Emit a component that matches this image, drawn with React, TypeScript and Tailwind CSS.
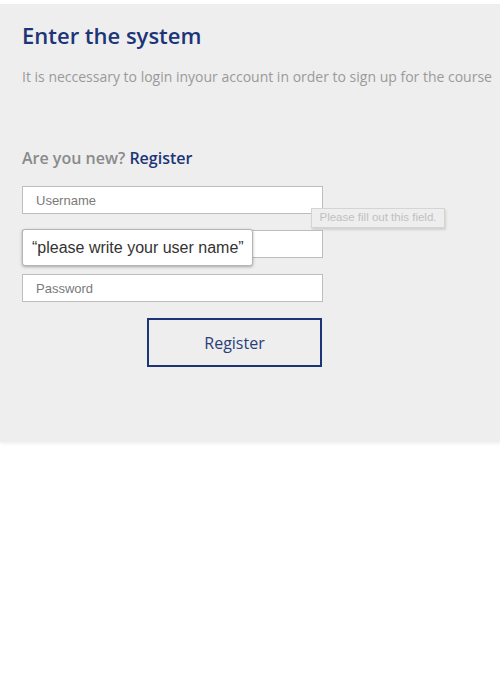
import { useState } from "react";

const LoginPanel = () => {
  const [username, setUsername] = useState("");
  const [nickname, setNickname] = useState("");
  const [password, setPassword] = useState("");

  return (
    <div className="min-h-[700px] bg-white pt-[4px] font-['Open_Sans',sans-serif]">
      <section className="h-[438px] bg-[#eeeeee] px-[22px] pt-[18px] shadow-[0_2px_3px_rgba(0,0,0,0.06)]">
        {/* Header */}
        <h1 className="text-[22px] leading-[26px] font-semibold text-[#1c3578]">Enter the system</h1>
        <p className="mt-[19px] text-[14px] leading-[20px] text-[#9a9a9a] whitespace-nowrap">
          It is neccessary to login inyour account in order to sign up for the course
        </p>

        <h2 className="mt-[60px] text-[16px] leading-[22px] font-semibold text-[#8a8a8a]">
          Are you new? <span className="text-[#1c3578]">Register</span>
        </h2>

        {/* Form */}
        <form className="mt-[17px] w-[301px] flex flex-col gap-[16px]" onSubmit={(e) => e.preventDefault()}>
          <div className="relative">
            <input
              type="text"
              value={username}
              onChange={(e) => setUsername(e.target.value)}
              placeholder="Username"
              className="w-full h-[28px] px-[13px] bg-white border border-[#bdbdbd] text-[13px] font-['Liberation_Sans',Arial,sans-serif] text-[#333] placeholder:text-[#7a7a7a] outline-none"
            />
            {/* Browser validation bubble */}
            <div className="absolute left-[289px] top-[22px] w-[134px] h-[20px] bg-[#eeeeee] border border-[#d4d4d4] shadow-[1px_2px_2px_rgba(0,0,0,0.12)] flex items-center justify-center text-[11.5px] text-[#c0c0c0] font-['Liberation_Sans',Arial,sans-serif] whitespace-nowrap">
              Please fill out this field.
            </div>
          </div>

          <div className="relative">
            <input
              type="text"
              value={nickname}
              onChange={(e) => setNickname(e.target.value)}
              className="w-full h-[28px] px-[13px] bg-white border border-[#bdbdbd] text-[13px] font-['Liberation_Sans',Arial,sans-serif] text-[#333] outline-none"
            />
            {/* Hint card over the field */}
            <div className="absolute left-0 top-[-1px] w-[231px] h-[37px] bg-white border border-[#b5b5b5] rounded-[3px] shadow-[0_1px_3px_rgba(0,0,0,0.3)] flex items-center pl-[9px] text-[16px] text-[#333] font-['Liberation_Sans',Arial,sans-serif] whitespace-nowrap">
              “please write your user name”
            </div>
          </div>

          <input
            type="password"
            value={password}
            onChange={(e) => setPassword(e.target.value)}
            placeholder="Password"
            className="w-full h-[28px] px-[13px] bg-white border border-[#bdbdbd] text-[13px] font-['Liberation_Sans',Arial,sans-serif] text-[#333] placeholder:text-[#7a7a7a] outline-none"
          />

          <button
            type="submit"
            className="self-end mr-[1px] w-[175px] h-[49px] border-2 border-[#1c3578] text-[16px] text-[#2a3f7a] bg-transparent"
          >
            Register
          </button>
        </form>
      </section>
    </div>
  );
};

export default function App() {
  return <LoginPanel />;
}
